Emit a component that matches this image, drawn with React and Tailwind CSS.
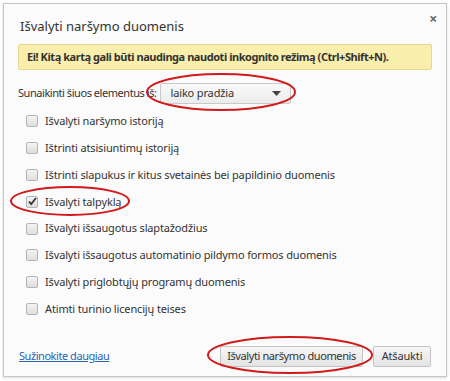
export default function App() {
  const items = [
    { label: 'Išvalyti naršymo istoriją', checked: false },
    { label: 'Ištrinti atsisiuntimų istoriją', checked: false },
    { label: 'Ištrinti slapukus ir kitus svetainės bei papildinio duomenis', checked: false },
    { label: 'Išvalyti talpyklą', checked: true },
    { label: 'Išvalyti išsaugotus slaptažodžius', checked: false },
    { label: 'Išvalyti išsaugotus automatinio pildymo formos duomenis', checked: false },
    { label: 'Išvalyti priglobtųjų programų duomenis', checked: false },
    { label: 'Atimti turinio licencijų teises', checked: false },
  ];

  return (
    <div
      className="relative w-[450px] h-[381px] bg-white p-[3px] text-[11px] tracking-[-0.15px] text-[#333]"
      style={{ fontFamily: '"Noto Sans", "Open Sans", sans-serif' }}
    >
      {/* Dialog */}
      <div className="h-[374px] w-[444px] border border-[#c6c6c6] bg-[#fbfbfb] shadow-[0_1px_3px_rgba(0,0,0,0.15)] flex flex-col">
        <div className="flex items-start justify-between pl-[16px] pr-[9px] pt-[10px]">
          <h1 className="text-[13px] tracking-normal text-[#333] leading-[20px] mt-[2px]">Išvalyti naršymo duomenis</h1>
          <span className="text-[14px] font-bold text-[#666] leading-none -mt-[2px]">×</span>
        </div>

        {/* Banner */}
        <div className="mx-[14px] mt-[8px] h-[26px] flex items-center px-[8px] bg-[#f9eeab] border border-[#e6d98f] rounded-[2px] font-bold tracking-[-0.45px] text-[#333] whitespace-nowrap">
          Ei! Kitą kartą gali būti naudinga naudoti inkognito režimą (Ctrl+Shift+N).
        </div>

        {/* Select row */}
        <div className="flex items-center mt-[13px] pl-[14px]">
          <span className="tracking-[-0.45px]">Sunaikinti šiuos elementus iš:</span>
          <div className="ml-[3px] w-[131px] h-[21px] flex items-center justify-between pl-[10px] pr-[9px] border border-[#c8c8c8] rounded-[2px] bg-gradient-to-b from-[#fafafa] to-[#ececec]">
            <span>laiko pradžia</span>
            <svg width="9" height="5" viewBox="0 0 9 5"><path d="M0 0h9L4.5 5z" fill="#444" /></svg>
          </div>
        </div>

        {/* Checkboxes */}
        <div className="flex flex-col mt-[4px] pl-[22px]">
          {items.map((it) => (
            <div key={it.label} className="flex items-center h-[26.8px] gap-[7px]">
              <div className="w-[12px] h-[12px] rounded-[2px] border border-[#b4b4b4] bg-gradient-to-b from-[#f4f4f4] to-[#dedede] flex items-center justify-center">
                {it.checked && (
                  <svg width="9" height="9" viewBox="0 0 9 9">
                    <path d="M1 4.5l2.2 2.5L8 1" stroke="#333" strokeWidth="1.8" fill="none" />
                  </svg>
                )}
              </div>
              <span>{it.label}</span>
            </div>
          ))}
        </div>

        {/* Footer */}
        <div className="mt-auto mb-[9px] flex items-center pl-[15px] pr-[15px]">
          <a className="text-[#2a64b4] underline tracking-[-0.45px]">Sužinokite daugiau</a>
          <div className="ml-auto flex gap-[10px]">
            <button className="h-[21px] w-[143px] border border-[#c4c4c4] rounded-[2px] bg-gradient-to-b from-[#f6f6f6] to-[#e4e4e4] text-[#333] tracking-[-0.4px] whitespace-nowrap">
              Išvalyti naršymo duomenis
            </button>
            <button className="h-[21px] w-[58px] border border-[#c4c4c4] rounded-[2px] bg-gradient-to-b from-[#f6f6f6] to-[#e4e4e4] text-[#333]">
              Atšaukti
            </button>
          </div>
        </div>
      </div>

      {/* Red annotation ellipses */}
      <svg className="absolute left-0 top-0 pointer-events-none" width="450" height="381">
        <ellipse cx="221" cy="92" rx="74" ry="18" fill="none" stroke="#d11a1a" strokeWidth="2" />
        <ellipse cx="70" cy="201" rx="59" ry="14" fill="none" stroke="#d11a1a" strokeWidth="2" />
        <ellipse cx="290" cy="355" rx="82" ry="18" fill="none" stroke="#d11a1a" strokeWidth="2" />
      </svg>
    </div>
  );
}
